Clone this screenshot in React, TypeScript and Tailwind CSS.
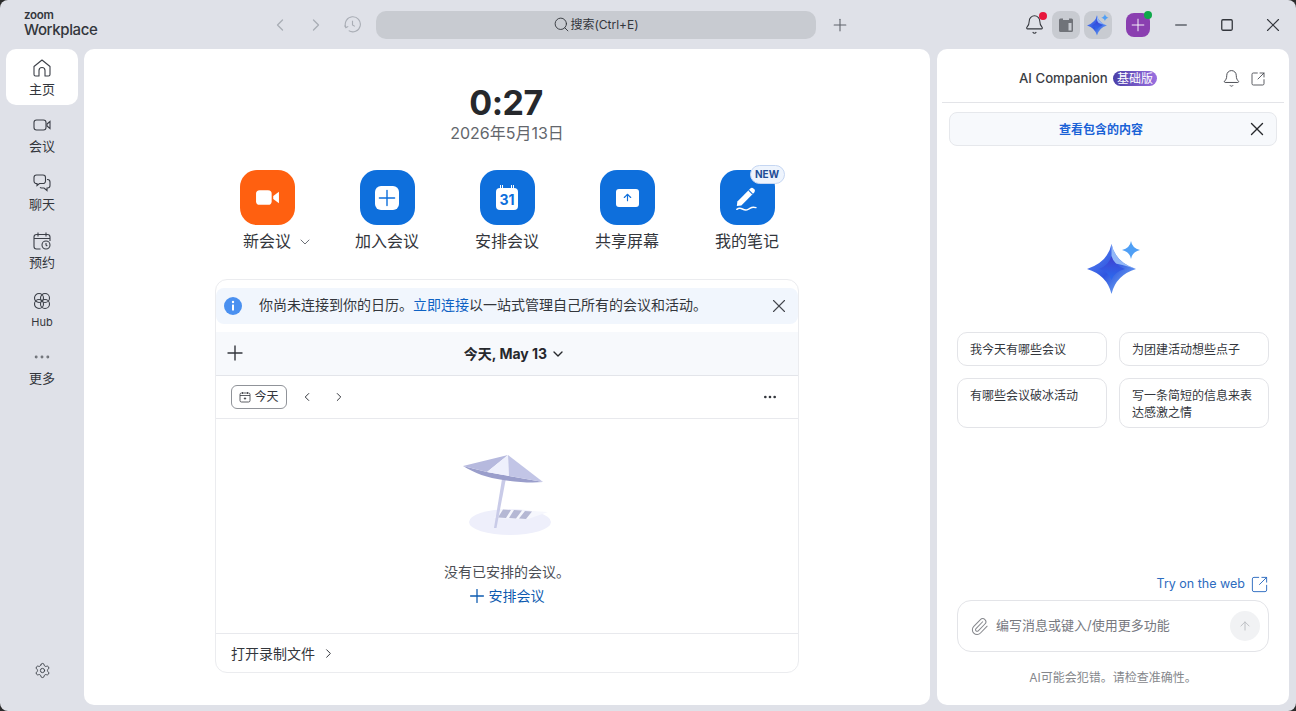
import type { ReactNode } from "react";
import { ArrowUp, Bell, ChevronDown, ChevronLeft, ChevronRight, Ellipsis, Minus, Paperclip, Plus, Search, Settings, Square, SquareArrowOutUpRight, X } from "lucide-react";

const NAV = [
  { label: "主页", icon: "home", active: true },
  { label: "会议", icon: "video" },
  { label: "聊天", icon: "chat" },
  { label: "预约", icon: "cal" },
  { label: "Hub", icon: "hub" },
  { label: "更多", icon: "more" },
];

function NavIcon({ name }: { name: string }) {
  const cls = "h-[20px] w-[20px] text-[#3b3f47]";
  if (name === "more") return <Ellipsis className="h-[20px] w-[20px] text-[#6f7278]" strokeWidth={1.5} />;
  return (
    <svg viewBox="0 0 20 20" className={cls} fill="none" stroke="currentColor" strokeWidth="1.1">
      {name === "home" && (
        <path d="M10 2L18 8.500V16.500a1.500 1.500 0 0 1-1.500 1.500H13V12.500a3 3 0 0 0-6 0V18H3.500A1.500 1.500 0 0 1 2 16.500V8.500Z" strokeLinejoin="round" />
      )}
      {name === "video" && (
        <>
          <rect x="2" y="5" width="12" height="10" rx="2.500" />
          <path d="M15 9l3-2.500v7l-3-2.500z" />
        </>
      )}
      {name === "chat" && (
        <>
          <path d="M4.500 2h6.500a2.500 2.500 0 0 1 2.500 2.500v3.500a2.500 2.500 0 0 1-2.500 2.500H7.500l-2.500 2v-2h-.5A2.500 2.500 0 0 1 2 8V4.500A2.500 2.500 0 0 1 4.500 2Z" />
          <path d="M15 6.500h.5A2.500 2.500 0 0 1 18 9v3.500a2.500 2.500 0 0 1-2.500 2.500H15v2.500L12 15H9.500A2.500 2.500 0 0 1 8 14.300" />
        </>
      )}
      {name === "cal" && (
        <>
          <path d="M8.500 18H4.500A2.500 2.500 0 0 1 2 15.500V6A2.500 2.500 0 0 1 4.500 3.500h11A2.500 2.500 0 0 1 18 6v4M2 7.500h16M6 1.500v4M14 1.500v4" />
          <circle cx="14" cy="14" r="4" />
          <path d="M14 12v2l1.300 1" />
        </>
      )}
      {name === "hub" && (
        <>
          <circle cx="7" cy="7" r="4.500" />
          <circle cx="13" cy="7" r="4.500" />
          <circle cx="7" cy="13" r="4.500" />
          <circle cx="13" cy="13" r="4.500" />
        </>
      )}
    </svg>
  );
}

function Spark({ className, id }: { className: string; id: string }) {
  return (
    <svg viewBox="0 0 54 54" className={className}>
      <defs>
        <linearGradient id={`${id}a`} x1="0" y1="0" x2="1" y2="1">
          <stop offset="0" stopColor="#5f8df5" />
          <stop offset="0.5" stopColor="#2f55e0" />
          <stop offset="1" stopColor="#8ccbfa" />
        </linearGradient>
        <linearGradient id={`${id}b`} x1="0" y1="0" x2="0" y2="1">
          <stop offset="0" stopColor="#3f3fd0" />
          <stop offset="1" stopColor="#2a6cf0" />
        </linearGradient>
      </defs>
      <path d="M24.500 3Q28 21 49 28 29 34 24.500 53 20 34 0 28 21 21 24.500 3Z" fill={`url(#${id}a)`} />
      <path d="M24.500 3Q28 21 49 28 34 23 24.500 22Z" fill="#a9cdfb" opacity="0.8" />
      <path d="M24.500 15Q27 24 38 28 27 31 24.500 39 22 31 12 28 22 24 24.500 15Z" fill={`url(#${id}b)`} />
      <path d="M44 0Q45 7 53 9 45 11 44 18 43 11 35 9 43 7 44 0Z" fill="#4f9ff5" />
    </svg>
  );
}

function Action({ label, bg, children, caret, badge }: { label: string; bg: string; children: ReactNode; caret?: boolean; badge?: boolean }) {
  return (
    <div className="flex w-[120px] flex-col items-center">
      <div className={`relative flex h-[55px] w-[55px] items-center justify-center rounded-[17px] ${bg}`}>
        {children}
        {badge && (
          <span className="absolute -right-[10px] -top-[5px] flex h-[19px] w-[35px] items-center justify-center rounded-full border border-[#c5d6f2] bg-[#eef4fd] text-[10px] font-bold text-[#1f4e96]">
            NEW
          </span>
        )}
      </div>
      <div className="relative mt-[6px] text-[16px] leading-[20px] text-[#33363c]">
        {label}
        {caret && <ChevronDown className="absolute -right-[22px] top-[3px] h-[16px] w-[16px] text-[#6d7178]" strokeWidth={1.5} />}
      </div>
    </div>
  );
}

function Chip({ text, tall }: { text: string; tall?: boolean }) {
  return (
    <div className={`w-[150px] rounded-[10px] border border-[#e3e4e8] px-3 text-[12px] leading-[17px] text-[#34373d] ${tall ? "h-[50px] pt-[8px]" : "flex h-[34px] items-center"}`}>
      {text}
    </div>
  );
}

export default function App() {
  return (
    <div className="h-[711px] w-[1296px] overflow-hidden bg-[#2b2b2b] font-['Inter','Noto_Sans_CJK_SC',sans-serif]">
      <div className="flex h-full flex-col rounded-lg bg-[#dfe1e8]">
        {/* title bar */}
        <div className="flex h-[49px] shrink-0 items-center">
          <div className="ml-[24px] w-[246px] text-[#33363c]">
            <div className="text-[11.5px] font-semibold leading-[11px] tracking-tight">zoom</div>
            <div className="text-[15px] font-medium leading-[18px] tracking-tight">Workplace</div>
          </div>
          <div className="flex items-center text-[#a9adb5]">
            <ChevronLeft className="h-5 w-5" strokeWidth={1.5} />
            <ChevronRight className="ml-[16px] h-5 w-5" strokeWidth={1.5} />
            <svg viewBox="0 0 18 18" className="ml-[18px] h-[17px] w-[17px]" fill="none" stroke="currentColor" strokeWidth="1.2">
              <path d="M2 12a8 8 0 1 1 3 3.500M9 5v4.500l2.500 1.500M.5 10L2 12.500 4.500 11" />
            </svg>
          </div>
          <div className="ml-[15px] flex h-[28px] w-[440px] items-center justify-center rounded-[10px] bg-[#c8cbd1] text-[12px] text-[#33363c]">
            <Search className="h-[17px] w-[17px]" strokeWidth={1.3} />
            搜索(Ctrl+E)
          </div>
          <Plus className="ml-[14px] h-5 w-5 text-[#5f636b]" strokeWidth={1.3} />
          <div className="ml-[174px] flex items-center">
            <div className="relative">
              <Bell className="h-[21px] w-[21px] text-[#33363c]" strokeWidth={1.2} />
              <span className="absolute -right-[2px] -top-[2px] h-2 w-2 rounded-full bg-[#e8173d]" />
            </div>
            <div className="ml-[7px] flex h-7 w-7 items-center justify-center rounded-lg bg-[#c8cbd1]">
              <svg viewBox="0 0 16 16" className="h-4 w-4">
                <path d="M2.500 1.500h2.500v1.500h6V1.500h2.500A1.500 1.500 0 0 1 15 3v10.500a1.500 1.500 0 0 1-1.500 1.500h-11A1.500 1.500 0 0 1 1 13.500V3a1.500 1.500 0 0 1 1.500-1.500Z" fill="#707379" />
                <rect x="10.500" y="6" width="3" height="7.500" fill="#c8cbd1" />
              </svg>
            </div>
            <div className="ml-1 flex h-7 w-7 items-center justify-center rounded-lg bg-[#c8cbd1]">
              <Spark id="tb" className="h-[22px] w-[22px]" />
            </div>
            <div className="relative ml-[14px] flex h-6 w-6 items-center justify-center rounded-[8px] bg-[#8a3fb0]">
              <Plus className="h-5 w-5 text-white" strokeWidth={1.1} />
              <span className="absolute -right-[2px] -top-[2px] h-2 w-2 rounded-full bg-[#0fa84a]" />
            </div>
            <Minus className="ml-[22px] h-[18px] w-[18px] text-[#5f636b]" strokeWidth={2} />
            <Square className="ml-[30px] h-[14px] w-[14px] text-[#33363c]" strokeWidth={2.2} />
            <X className="ml-[28px] h-[22px] w-[22px] text-[#33363c]" strokeWidth={1.2} />
          </div>
        </div>

        <div className="flex min-h-0 flex-1 pb-[6px]">
          {/* sidebar */}
          <div className="flex w-[84px] shrink-0 flex-col px-[6px]">
            {NAV.map((n) => (
              <div
                key={n.label}
                className={`mb-[2px] flex h-[56px] shrink-0 flex-col items-center justify-center ${n.label === "Hub" ? "pt-[4px]" : ""} ${n.active ? "rounded-[10px] bg-white pt-[1px]" : ""}`}
              >
                <NavIcon name={n.icon} />
                <span className={`${n.label === "Hub" ? "text-[11px]" : "text-[13px]"} mt-[3px] leading-[17px] text-[#33363c]`}>{n.label}</span>
              </div>
            ))}
            <div className="mt-auto flex justify-center pb-[26px]">
              <Settings className="h-[17px] w-[17px] text-[#3b3f47]" strokeWidth={1.3} />
            </div>
          </div>

          {/* main */}
          <div className="flex w-[846px] shrink-0 flex-col items-center rounded-[10px] bg-white">
            <div className="mt-[33px] pr-[2px] text-[34px] font-bold leading-[42px] tracking-[-0.5px] text-[#26282c]">0:27</div>
            <div className="-mt-px text-[16px] leading-[20px] text-[#63666c]">2026年5月13日</div>
            <div className="mt-[27px] flex">
              <Action label="新会议" bg="bg-[#ff6010]" caret>
                <svg viewBox="0 0 24 24" className="h-[25px] w-[25px] fill-white">
                  <rect x="1" y="5" width="15" height="14" rx="3.500" />
                  <path d="M17.500 10.500L23 6.500v11l-5.500-4z" />
                </svg>
              </Action>
              <Action label="加入会议" bg="bg-[#0e6fdc]">
                <div className="flex h-6 w-6 items-center justify-center rounded-[6px] bg-white">
                  <Plus className="h-[26px] w-[26px] shrink-0 text-[#0e6fdc]" strokeWidth={1.3} />
                </div>
              </Action>
              <Action label="安排会议" bg="bg-[#0e6fdc]">
                <div className="relative mt-[2px] flex h-[22px] w-[22px] items-center justify-center rounded-[4px] bg-white pt-[2px] text-[14px] font-bold leading-none text-[#0e6fdc]">
                  31
                  <span className="absolute -top-[3px] left-[4px] h-[6px] w-[3px] rounded-b-full border border-t-0 border-white" />
                  <span className="absolute -top-[3px] right-[4px] h-[6px] w-[3px] rounded-b-full border border-t-0 border-white" />
                </div>
              </Action>
              <Action label="共享屏幕" bg="bg-[#0e6fdc]">
                <div className="flex h-[18px] w-[23px] items-center justify-center rounded-[3px] bg-white">
                  <ArrowUp className="h-[11px] w-[11px] text-[#0e6fdc]" strokeWidth={2.5} />
                </div>
              </Action>
              <Action label="我的笔记" bg="bg-[#0e6fdc]" badge>
                <svg viewBox="0 0 24 24" className="h-[27px] w-[27px]" fill="none">
                  <path d="M3 15.500L14.500 4a2 2 0 0 1 2.800 0l.7.7a2 2 0 0 1 0 2.800L6.500 19l-4 .5z" fill="white" />
                  <path d="M13 5.500L16.500 9" stroke="#0e6fdc" strokeWidth="1" />
                  <path d="M2.500 22.500c4-3 5 1.500 9 .5s3-3.500 8-2" stroke="white" strokeWidth="1.300" strokeLinecap="round" />
                </svg>
              </Action>
            </div>

            {/* calendar card */}
            <div className="mt-[28px] flex h-[394px] w-[584px] flex-col rounded-xl border border-[#ebecef] pt-[8px]">
              <div className="flex h-[36px] shrink-0 items-center rounded-lg bg-[#f1f6fd] pl-[8px] pr-[8px] text-[14px] text-[#33363c]">
                <svg viewBox="0 0 18 18" className="h-[18px] w-[18px]">
                  <circle cx="9" cy="9" r="9" fill="#4a90f0" />
                  <rect x="8" y="7.500" width="2" height="6" rx="0.500" fill="white" />
                  <circle cx="9" cy="5" r="1.200" fill="white" />
                </svg>
                <div className="mb-[4px] ml-[17px] flex-1">
                  你尚未连接到你的日历。<span className="text-[#0e62c4]">立即连接</span>以一站式管理自己所有的会议和活动。
                </div>
                <X className="h-[22px] w-[22px] text-[#44474e]" strokeWidth={1.2} />
              </div>
              <div className="relative mt-[8px] flex h-[44px] shrink-0 items-center justify-center border-b border-[#e3e5ea] bg-[#f7f9fc] pl-[16px] text-[14px] font-bold text-[#26282c]">
                <Plus className="absolute left-[7px] top-[9px] h-6 w-6 text-[#33363c]" strokeWidth={1.4} />
                今天, May 13
                <ChevronDown className="ml-[3px] h-[16px] w-[16px]" strokeWidth={2} />
              </div>
              <div className="flex h-[43px] shrink-0 items-center border-b border-[#e8e9ed] pl-[15px] pr-[20px]">
                <div className="flex h-[24px] w-[56px] items-center justify-center gap-[3px] rounded-[6px] border border-[#909399] text-[12px] text-[#33363c]">
                  <svg viewBox="0 0 12 12" className="h-[12px] w-[12px]" fill="none" stroke="currentColor" strokeWidth="0.8">
                    <rect x="1" y="2" width="10" height="9" rx="1.500" />
                    <path d="M1 4.500h10M3.500 1v2M8.500 1v2" />
                    <circle cx="6" cy="7.500" r="0.700" fill="currentColor" />
                  </svg>
                  今天
                </div>
                <ChevronLeft className="ml-[13px] h-[14px] w-[14px] text-[#33363c]" strokeWidth={1.7} />
                <ChevronRight className="ml-[18px] h-[14px] w-[14px] text-[#33363c]" strokeWidth={1.7} />
                <Ellipsis className="ml-auto h-4 w-4 text-[#33363c]" strokeWidth={2} />
              </div>
              <div className="flex flex-1 flex-col items-center">
                <svg viewBox="0 0 90 82" className="mt-[35px] h-[82px] w-[90px]">
                  <ellipse cx="48" cy="68" rx="41" ry="13" fill="#eeeffb" />
                  <path d="M40 55L86 58 66 65 32 64Z" fill="#f6f7fd" />
                  <path d="M41 55.500L49 56 44 64 36 63.500Z M52 56L60 56.500 54 64.500 47 64Z M63 57L70 57.500 64 65 57 64.500Z" fill="#b5b8d4" />
                  <path d="M41 19L32 74 34.500 74 45 19Z" fill="#c9cbe8" />
                  <path d="M1 12C12 19 26 24 41 26 56 28 68 29 81 28L47 22 25 18Z" fill="#9a9ecb" />
                  <path d="M46 1L1 12 25 18Z" fill="#b6b9de" />
                  <path d="M46 1L25 18 47 22Z" fill="#eef0fc" />
                  <path d="M46 1L47 22 81 28Z" fill="#c2c5e6" />
                </svg>
                <div className="mt-[26px] text-[14px] leading-[20px] text-[#4b4e54]">没有已安排的会议。</div>
                <div className="mt-[3px] flex items-center gap-[1px] pr-[4px] text-[14px] leading-[20px] text-[#0d5bb0]">
                  <Plus className="h-[22px] w-[22px]" strokeWidth={1.4} />
                  安排会议
                </div>
              </div>
              <div className="flex h-[39px] shrink-0 items-center border-t border-[#e8e9ed] pl-[15px] pt-[1px] text-[14px] text-[#33363c]">
                打开录制文件
                <ChevronRight className="ml-[6px] h-[15px] w-[15px]" strokeWidth={1.6} />
              </div>
            </div>
          </div>

          {/* AI panel */}
          <div className="ml-[7px] flex w-[352px] shrink-0 flex-col rounded-[10px] bg-white">
            <div className="mx-[5px] flex h-[54px] shrink-0 items-center border-b border-[#e3e4e8] pl-[77px] pt-[6px]">
              <span className="w-[90px] whitespace-nowrap text-[13.2px] font-medium text-[#3b3e44]">AI Companion</span>
              <span className="ml-1 flex h-[15px] w-[44px] items-center justify-center rounded-full bg-gradient-to-r from-[#4b3fa8] to-[#9a6fe0] text-[12px] leading-none text-white">基础版</span>
              <Bell className="ml-[65px] h-[19px] w-[19px] text-[#44474e]" strokeWidth={1.2} />
              <SquareArrowOutUpRight className="ml-[9px] h-[16px] w-[16px] text-[#44474e]" strokeWidth={1.3} />
            </div>
            <div className="relative mx-[12px] mt-[9px] flex h-[34px] shrink-0 items-center justify-center rounded-lg border border-[#e6e8ec] bg-[#f7f9fc] pr-[24px] pt-[1px] text-[12px] font-semibold text-[#1a62d6]">
              查看包含的内容
              <X className="absolute right-[8px] top-[5px] h-[22px] w-[22px] text-[#26282c]" strokeWidth={1.5} />
            </div>
            <div className="mt-[95px] flex justify-center pl-[2px]">
              <Spark id="lg" className="h-[54px] w-[54px]" />
            </div>
            <div className="mx-[20px] mt-[37px] grid grid-cols-[150px_150px] gap-x-[12px] gap-y-[12px]">
              <Chip text="我今天有哪些会议" />
              <Chip text="为团建活动想些点子" />
              <Chip text="有哪些会议破冰活动" tall />
              <Chip text="写一条简短的信息来表达感激之情" tall />
            </div>
            <div className="mr-[20px] mt-auto flex items-center justify-end gap-[5px] text-[12.5px] text-[#2d6cc0]">
              Try on the web
              <SquareArrowOutUpRight className="h-[19px] w-[19px]" strokeWidth={1.2} />
            </div>
            <div className="mx-[20px] mt-[6px] flex h-[52px] shrink-0 items-center rounded-[14px] border border-[#e3e4e8] pl-[12px] pr-[8px] text-[13px] text-[#77797f]">
              <Paperclip className="h-[19px] w-[19px] text-[#85878c]" strokeWidth={1.3} />
              <span className="ml-[7px] flex-1">编写消息或键入/使用更多功能</span>
              <div className="flex h-[30px] w-[30px] items-center justify-center rounded-full bg-[#f1f2f4]">
                <ArrowUp className="h-[14px] w-[14px] text-[#bbbdc2]" strokeWidth={1.6} />
              </div>
            </div>
            <div className="mb-[19px] mt-[17px] text-center text-[12px] leading-[17px] text-[#85878c]">AI可能会犯错。请检查准确性。</div>
          </div>
        </div>
      </div>
    </div>
  );
}
